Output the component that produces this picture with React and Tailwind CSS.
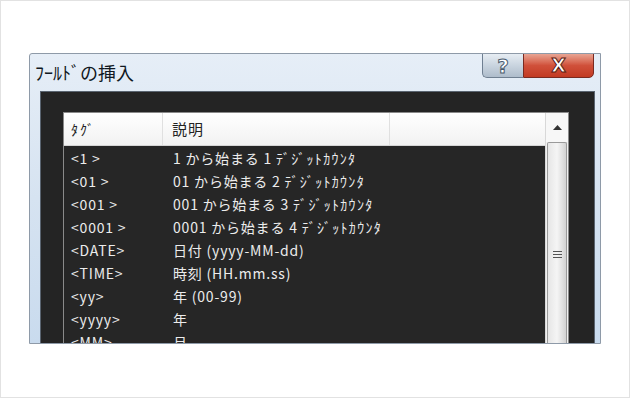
import React from "react";

const K = ({ children }) => <span className="tracking-[1.3px]">{children}</span>;

const rows = [
  ["<1 >", <>1 から始まる 1 <K>ﾃﾞｼﾞｯﾄｶｳﾝﾀ</K></>],
  ["<01 >", <>01 から始まる 2 <K>ﾃﾞｼﾞｯﾄｶｳﾝﾀ</K></>],
  ["<001 >", <>001 から始まる 3 <K>ﾃﾞｼﾞｯﾄｶｳﾝﾀ</K></>],
  ["<0001 >", <>0001 から始まる 4 <K>ﾃﾞｼﾞｯﾄｶｳﾝﾀ</K></>],
  ["<DATE>", "日付 (yyyy-MM-dd)"],
  ["<TIME>", "時刻 (HH.mm.ss)"],
  ["<yy>", "年 (00-99)"],
  ["<yyyy>", "年"],
  ["<MM>", "月"],
];

export default function App() {
  return (
    <div
      className="w-[630px] h-[398px] bg-white border border-[#e2e2e2] overflow-hidden"
      style={{ fontFamily: '"Noto Sans CJK JP", "Noto Sans", sans-serif' }}
    >
      <div className="ml-[28px] mt-[52px] w-[572px] h-[291px] flex flex-col border-l border-t border-r border-b border-[#8e9aa8] rounded-tl-[3px] overflow-hidden bg-gradient-to-b from-[#e6eef7] via-[#d6e3f1] to-[#c9dbee]">
        {/* title bar */}
        <div className="h-[37px] flex items-start shrink-0">
          <div className="pl-[5px] pt-[5px] text-[18px] text-[#101822]">ﾌｰﾙﾄﾞの挿入</div>
          <div className="ml-auto mr-[6px] flex h-[25px] -mt-[1px]">
            <div className="w-[41px] h-full rounded-bl-[5px] border border-[#6f7f91] border-r-0 bg-gradient-to-b from-[#e7edf3] via-[#c9d4df] to-[#aebccb] flex items-center justify-center">
              <span className="text-[20px] font-bold text-white leading-none" style={{ WebkitTextStroke: "1px #4a5a6c", fontFamily: '"DejaVu Sans", sans-serif' }}>?</span>
            </div>
            <div className="w-[71px] h-full rounded-br-[5px] border border-[#7a2a20] bg-gradient-to-b from-[#e8a493] via-[#d0503a] to-[#c23a22] flex items-center justify-center">
              <span className="text-[19px] font-bold text-white leading-none" style={{ WebkitTextStroke: "1px #5a1a10", fontFamily: '"DejaVu Sans", sans-serif' }}>X</span>
            </div>
          </div>
        </div>
        {/* client */}
        <div className="flex-1 flex pl-[10px] pr-[5px]">
          <div className="flex-1 bg-[#242424] border border-[#5a6470] pt-[20px] pl-[22px] pr-[25px] flex">
            <div className="flex-1 flex border border-[#8a8a8a] border-b-0 bg-[#262626]">
              <div className="flex-1 flex flex-col">
                <div className="h-[33px] flex bg-gradient-to-b from-[#ffffff] to-[#f2f2f2] border-b border-[#d5d5d5] text-[14px] text-[#222] shrink-0">
                  <div className="w-[99px] border-r border-[#e0e0e0] flex items-center pl-[7px] tracking-[2px]">ﾀｸﾞ</div>
                  <div className="w-[227px] border-r border-[#e0e0e0] flex items-center pl-[9px] text-[15px] tracking-[1px]">説明</div>
                  <div className="flex-1" />
                </div>
                <div className="flex flex-col text-[14px] text-[#ececec] pt-[1px] tracking-[0.8px]">
                  {rows.map(([t, d], i) => (
                    <div key={i} className="h-[23px] flex items-center whitespace-pre shrink-0">
                      <div className="w-[99px] pl-[7px]">{t}</div>
                      <div className="pl-[10px]">{d}</div>
                    </div>
                  ))}
                </div>
              </div>
              {/* scrollbar */}
              <div className="w-[23px] flex flex-col bg-[#f0f0f0] border-l border-[#d8d8d8]">
                <div className="h-[29px] flex items-center justify-center bg-[#f7f7f7]">
                  <svg width="9" height="5" viewBox="0 0 9 5"><path d="M0 5 L4.5 0 L9 5 Z" fill="#333" /></svg>
                </div>
                <div className="flex-1 mx-[1px] border border-[#9a9a9a] border-b-0 rounded-t-[2px] bg-gradient-to-r from-[#e6e6e6] via-[#f5f5f5] to-[#d2d2d2] flex flex-col items-center pt-[107px]">
                  <svg width="9" height="9" viewBox="0 0 9 9">
                    <path d="M0 1.5 H9 M0 4.5 H9 M0 7.5 H9" stroke="#555" strokeWidth="1.2" />
                  </svg>
                </div>
              </div>
            </div>
          </div>
        </div>
      </div>
    </div>
  );
}
